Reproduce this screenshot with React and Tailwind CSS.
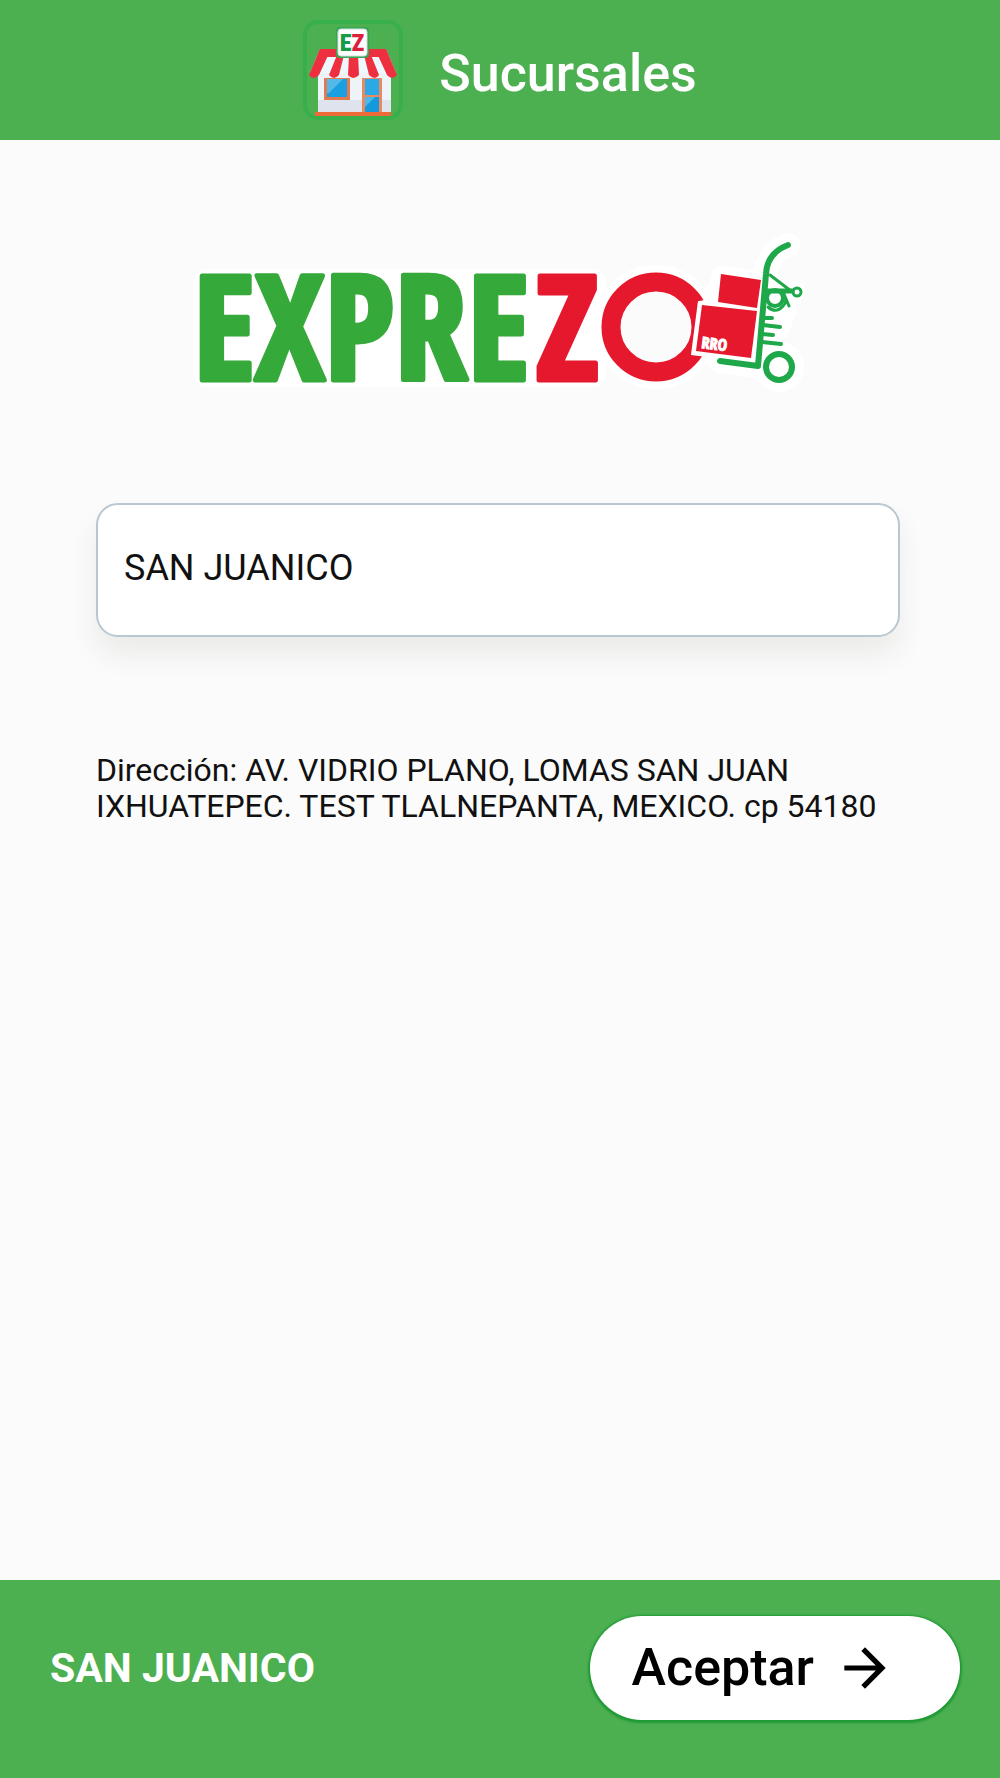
import { MdArrowForward } from "react-icons/md";

function StoreIcon() {
  return (
    <svg viewBox="0 0 100 100" className="size-25 shrink-0" aria-hidden="true">
      <rect x="2" y="2" width="96" height="96" rx="13" fill="none" stroke="#37b04b" strokeWidth="4" />
      <rect x="15" y="45" width="73" height="47" fill="#eef3f8" />
      <rect x="15" y="80" width="73" height="12" fill="#dfe3ee" />
      <path d="M17 29H83L93 53H7Z" fill="#eef7fb" />
      <path d="M17 29H83L86 37H14Z" fill="#e9303f" />
      <g fill="#ee2f40">
        <path d="M17 29H28L16 55Q10 61 6 55Z" />
        <path d="M34 35H41L36 55Q31 61 26 55Z" />
        <path d="M46 35H55L56 55Q50 61 45 55Z" />
        <path d="M61 35H68L76 55Q72 61 66 55Z" />
        <path d="M72 29H83L94 55Q89 61 84 55Z" />
      </g>
      <rect x="21" y="58" width="26" height="22" fill="#e07a50" />
      <rect x="24" y="59" width="20" height="18" fill="#1a9fe0" />
      <path d="M24 59H40L26 73H24Z" fill="#53b9e8" />
      <rect x="59" y="58" width="20" height="35" fill="#e58a62" />
      <rect x="62" y="59" width="14" height="16" fill="#2aa9e6" />
      <rect x="62" y="77" width="14" height="15" fill="#1499dc" />
      <path d="M62 77H72L62 87Z" fill="#4cb8ea" />
      <rect x="12" y="92" width="76" height="4" fill="#ec6a38" />
      <rect x="33" y="7" width="33" height="31" rx="4" fill="#36a853" />
      <rect x="35" y="9" width="29" height="27" rx="3" fill="#fff" stroke="#d5dce0" strokeWidth="1" />
      <text
        x="49"
        y="31"
        textAnchor="middle"
        className="font-['Roboto_Condensed',Roboto,sans-serif] text-[24px] font-black"
      >
        <tspan fill="#169b48">E</tspan>
        <tspan fill="#dd1f3c">Z</tspan>
      </text>
    </svg>
  );
}

const wordmark = "font-['Open_Sans_Condensed','Roboto_Condensed',sans-serif] text-[146px] font-bold";

function HandTruck() {
  return (
    <g fill="none" stroke="#1fa84a" strokeLinecap="round" strokeLinejoin="round">
      <path d="M608 15Q587 23 586 44L578 136L540 131" strokeWidth="6" />
      <path d="M590 45L611 61" strokeWidth="3" />
      <path d="M587 61H612" strokeWidth="5" />
      <circle cx="617" cy="62" r="4" strokeWidth="3" />
      <circle cx="595" cy="68" r="8" strokeWidth="4" />
      <path d="M588 77Q596 84 603 76Q608 72 604 64L609 76" strokeWidth="3" />
      <path d="M584 88H592M583 95L600 97M582 104L593 105M582 112L601 114" strokeWidth="4" />
      <circle cx="599" cy="137" r="13" strokeWidth="6" />
    </g>
  );
}

function Logo() {
  return (
    <svg viewBox="0 0 640 170" className="w-full max-w-160 overflow-visible" role="img" aria-label="EXPREZO RRO">
      <g stroke="#fff" strokeLinejoin="round" strokeLinecap="round">
        <rect x="22" y="47" width="396" height="102" rx="4" fill="#fff" strokeWidth="16" />
        <circle cx="476" cy="97" r="44" fill="none" strokeWidth="36" />
        <path d="M608 15Q587 23 586 44L578 136L540 131" fill="none" strokeWidth="24" />
        <path d="M542 46L579 51L574 136L516 120Z" fill="#fff" strokeWidth="20" />
        <path d="M588 60H616L600 100L580 114Z" fill="#fff" strokeWidth="18" />
        <circle cx="599" cy="137" r="18" fill="#fff" strokeWidth="14" />
      </g>
      <g strokeWidth="5" strokeLinejoin="round">
        <text x="13" y="150" fill="#35a93a" stroke="#35a93a" className={wordmark}>
          EXPRE
        </text>
        <text x="356" y="150" fill="#e6182d" stroke="#e6182d" className={wordmark}>
          Z
        </text>
      </g>
      <circle cx="476" cy="97" r="45" fill="#fbfbfb" stroke="#e6182d" strokeWidth="19" />
      <path d="M541 44L581 50L577 78L577 81L571 128L516 121L522 75L538 72Z" fill="#fff" stroke="#fff" strokeWidth="9" />
      <path d="M541 44L581 50L577 78L538 72Z" fill="#e6182d" />
      <path d="M522 75L577 81L571 128L516 121Z" fill="#e6182d" />
      <HandTruck />
      <text
        transform="translate(521 118) rotate(7)"
        fill="#fff"
        stroke="#fff"
        className="font-['Open_Sans_Condensed','Roboto_Condensed',sans-serif] text-[16px] font-bold"
      >
        RRO
      </text>
    </svg>
  );
}

export default function App() {
  return (
    <div className="flex min-h-screen flex-col bg-[#fbfbfb] font-[Roboto,sans-serif] text-[#111]">
      <header className="flex items-center justify-center gap-9 bg-[#4caf50] py-5">
        <StoreIcon />
        <h1 className="pt-2 text-[52px] leading-none font-medium text-white">Sucursales</h1>
      </header>

      <main className="flex flex-1 flex-col px-24">
        <div className="flex justify-center pt-[90px]">
          <Logo />
        </div>

        <div className="mt-[103px] pr-1">
          <label htmlFor="sucursal" className="sr-only">
            Sucursal
          </label>
          <input
            id="sucursal"
            type="text"
            defaultValue="SAN JUANICO"
            className="block w-full rounded-[22px] border-2 border-[#b9c8d0] bg-white px-[26px] pt-10 pb-11 text-[36px] leading-[46px] shadow-[0_18px_28px_rgba(50,50,35,0.08)] outline-none"
          />
        </div>

        <p className="mt-[115px] text-[32px] leading-9">
          Dirección: AV. VIDRIO PLANO, LOMAS SAN JUAN IXHUATEPEC. TEST TLALNEPANTA, MEXICO. cp 54180
        </p>
      </main>

      <footer className="flex items-center justify-between bg-[#4caf50] pt-9 pr-10 pb-[58px] pl-[50px]">
        <p className="text-[41px] leading-none font-bold text-white">SAN JUANICO</p>
        <button
          type="button"
          className="flex h-26 items-center gap-5 rounded-full bg-white pr-16 pl-[42px] text-[52px] leading-none font-medium text-black shadow-[0_1px_2px_2px_#1f9a35]"
        >
          Aceptar
          <MdArrowForward className="size-[62px]" aria-hidden="true" />
        </button>
      </footer>
    </div>
  );
}
